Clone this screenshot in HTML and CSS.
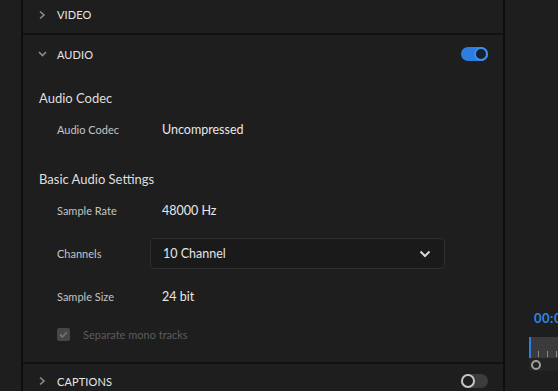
FILE: index.html
```html
<!DOCTYPE html>
<html lang="en">
<head>
    <meta charset="UTF-8">
    <meta name="viewport" content="width=device-width, initial-scale=1.0">
    <title>Export Settings</title>
    <link rel="stylesheet" href="styles.css">
</head>
<body>
    <aside class="side-panel"></aside>

    <main class="settings">
        <section class="section">
            <div class="section-header header-video">
                <svg class="chevron" width="18" height="14" viewBox="0 0 18 14"><polyline points="2,3.5 6,7 2,10.5" fill="none" stroke="#8c8c8c" stroke-width="1.6"/></svg>
                <span class="section-title">VIDEO</span>
            </div>
        </section>

        <section class="section">
            <div class="section-header">
                <svg class="chevron" width="18" height="14" viewBox="0 0 18 14"><polyline points="1,5 4.5,8.5 8,5" fill="none" stroke="#8c8c8c" stroke-width="1.6"/></svg>
                <span class="section-title">AUDIO</span>
                <span class="toggle on"><span class="knob"></span></span>
            </div>

            <div class="section-body">
                <h3 class="group-title">Audio Codec</h3>
                <div class="field field-codec">
                    <span class="label">Audio Codec</span>
                    <span class="value">Uncompressed</span>
                </div>

                <h3 class="group-title group-basic">Basic Audio Settings</h3>
                <div class="field field-first">
                    <span class="label">Sample Rate</span>
                    <span class="value">48000 Hz</span>
                </div>
                <div class="field">
                    <span class="label">Channels</span>
                    <div class="select">
                        <span>10 Channel</span>
                        <svg width="12" height="8" viewBox="0 0 12 8"><polyline points="1.5,1.5 6,6 10.5,1.5" fill="none" stroke="#d8d8d8" stroke-width="2"/></svg>
                    </div>
                </div>
                <div class="field">
                    <span class="label">Sample Size</span>
                    <span class="value">24 bit</span>
                </div>
                <label class="checkbox-row">
                    <span class="checkbox">
                        <svg width="13" height="13" viewBox="0 0 13 13"><polyline points="3,6.5 5.5,9 10,4" fill="none" stroke="#707070" stroke-width="1.8"/></svg>
                    </span>
                    <span class="checkbox-text">Separate mono tracks</span>
                </label>
            </div>
        </section>

        <section class="section">
            <div class="section-header header-captions">
                <svg class="chevron" width="18" height="14" viewBox="0 0 18 14"><polyline points="2,3.5 6,7 2,10.5" fill="none" stroke="#8c8c8c" stroke-width="1.6"/></svg>
                <span class="section-title">CAPTIONS</span>
                <span class="toggle"><span class="knob"></span></span>
            </div>
        </section>
    </main>

    <aside class="preview-panel">
        <div class="timecode">00:0</div>
        <div class="timeline">
            <div class="ruler">
                <span class="tick"></span>
                <span class="tick"></span>
                <span class="tick"></span>
            </div>
            <div class="scrub"><span class="scrub-knob"></span></div>
        </div>
    </aside>
</body>
</html>
```

FILE: styles.css
```css
body {
    margin: 0;
    height: 391px;
    overflow: hidden;
    display: flex;
    background: #1e1e1e;
    font-family: Lato, "Open Sans", sans-serif;
    color: #dcdcdc;
}
.side-panel {
    width: 21px;
    flex: none;
    border-right: 2px solid #0e0e0e;
}
.settings {
    width: 480px;
    flex: none;
    border-right: 2px solid #0e0e0e;
}
.section {
    border-bottom: 2px solid #111;
}
.section-header {
    height: 38px;
    display: flex;
    align-items: center;
    padding: 0 15px 0 15px;
    box-sizing: border-box;
}
.header-video {
    height: 33px;
    padding-bottom: 4px;
}
.header-captions {
    height: 34px;
}
.chevron {
    margin-right: 1px;
}
.section-title {
    font-size: 11px;
    color: #e6e6e6;
    letter-spacing: 0.1px;
    flex: 1;
}
.toggle {
    width: 27px;
    height: 14px;
    border-radius: 7px;
    background: #3c3c3c;
    display: flex;
    align-items: center;
}
.toggle .knob {
    width: 10px;
    height: 10px;
    border-radius: 50%;
    border: 2px solid #c6c6c6;
    background: #1e1e1e;
}
.toggle.on {
    background: #2d7ee0;
    justify-content: flex-end;
}
.toggle.on .knob {
    border-color: #3b8df0;
    background: #17202b;
}
.section-body {
    padding: 9px 0 17px 16px;
}
.group-title {
    margin: 0;
    height: 32px;
    line-height: 32px;
    font-size: 13px;
    font-weight: normal;
    color: #dedede;
}
.group-basic {
    margin-top: 20px;
    height: 30px;
    line-height: 30px;
}
.field {
    display: flex;
    align-items: center;
    height: 31px;
    margin-top: 12px;
    padding-left: 18px;
}
.field-codec {
    height: 30px;
    margin-top: 0;
}
.field-first {
    margin-top: 1px;
}
.label {
    width: 105px;
    flex: none;
    font-size: 11px;
    color: #c4c4c4;
}
.value {
    font-size: 12.5px;
    color: #e8e8e8;
}
.select {
    margin-left: -12px;
    width: 295px;
    height: 31px;
    box-sizing: border-box;
    border: 1px solid #2f2f2f;
    border-radius: 4px;
    background: #1a1a1a;
    display: flex;
    align-items: center;
    justify-content: space-between;
    padding: 0 13px 0 12px;
    font-size: 12.5px;
    color: #e4e4e4;
}
.checkbox-row {
    display: flex;
    align-items: center;
    height: 22px;
    margin-top: 11px;
    padding-left: 18px;
}
.checkbox {
    width: 13px;
    height: 13px;
    border-radius: 2px;
    background: #464646;
    display: flex;
    margin-right: 13px;
}
.checkbox-text {
    font-size: 11px;
    color: #5c5c5c;
}
.preview-panel {
    flex: 1;
    padding-top: 310px;
    padding-left: 24px;
    overflow: hidden;
}
.timecode {
    font-size: 13px;
    font-weight: bold;
    color: #2f86e3;
    white-space: nowrap;
    padding-left: 5px;
    letter-spacing: 0.5px;
}
.timeline {
    margin-top: 11px;
    background: #242424;
}
.ruler {
    height: 21px;
    border-left: 2px solid #2d7ee0;
    background: #3b3b3b;
    display: flex;
    align-items: flex-end;
    gap: 8px;
    padding-left: 7px;
}
.tick {
    width: 1px;
    height: 6px;
    background: #8a8a8a;
    margin-bottom: 1px;
}
.scrub {
    height: 13px;
    display: flex;
    align-items: center;
    padding-left: 2px;
}
.scrub-knob {
    width: 6px;
    height: 6px;
    border-radius: 50%;
    border: 2px solid #a0a0a0;
}
```
